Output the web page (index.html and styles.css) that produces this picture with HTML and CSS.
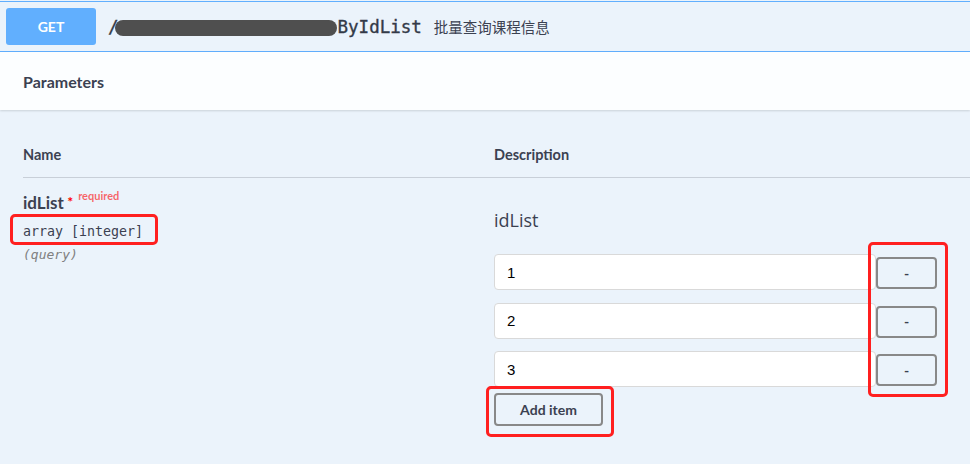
FILE: index.html
```html
<!DOCTYPE html>
<html lang="zh">
<head>
<meta charset="utf-8">
<title>Swagger</title>
<link rel="stylesheet" href="styles.css">
</head>
<body>
<div class="page">
  <div class="opblock">
    <div class="summary">
      <span class="method">GET</span>
      <span class="path">/<span class="redact"></span>ByIdList</span>
      <span class="desc">批量查询课程信息</span>
    </div>
    <div class="section-header">
      <h4 class="section-title">Parameters</h4>
    </div>
    <div class="params">
      <div class="row head">
        <div class="col-name">Name</div>
        <div class="col-desc">Description</div>
      </div>
      <div class="row param">
        <div class="col-name">
          <div class="param-name">idList<span class="star">&nbsp;*</span><span class="required">required</span></div>
          <div class="param-type">array [integer]</div>
          <div class="param-in">(query)</div>
        </div>
        <div class="col-desc">
          <div class="desc-title">idList</div>
          <div class="item"><input class="item-input" type="text" value="1"><button class="btn-minus">-</button></div>
          <div class="item"><input class="item-input" type="text" value="2"><button class="btn-minus">-</button></div>
          <div class="item"><input class="item-input" type="text" value="3"><button class="btn-minus">-</button></div>
          <button class="btn-add">Add item</button>
        </div>
      </div>
    </div>
  </div>
  <div class="mark mark-type"></div>
  <div class="mark mark-minus"></div>
  <div class="mark mark-add"></div>
</div>
</body>
</html>
```
FILE: styles.css
```css
* { box-sizing: border-box; }
html, body { margin: 0; padding: 0; }
body {
  background: #ebf3fb;
  color: #3b4151;
  font-family: "Open Sans", "Noto Sans", sans-serif;
  width: 970px;
  height: 464px;
  overflow: hidden;
}
.page { position: relative; width: 970px; height: 464px; }
.opblock { padding-top: 1px; }
.summary {
  display: flex;
  align-items: center;
  height: 51px;
  padding: 6px 6px;
  border-top: 1px solid #61affe;
  border-bottom: 1px solid #61affe;
}
.method {
  display: flex;
  align-items: center;
  justify-content: center;
  width: 90px;
  height: 37px;
  background: #61affe;
  border-radius: 3px;
  color: #fff;
  font-family: "Lato", sans-serif;
  font-weight: 700;
  font-size: 14px;
}
.path {
  display: flex;
  align-items: center;
  margin-left: 12px;
  font-family: "DejaVu Sans Mono", monospace;
  font-size: 17.5px;
  font-weight: 400;
  color: #333a48;
  -webkit-text-stroke: 0.35px #333a48;
}
.redact {
  display: inline-block;
  width: 222px;
  height: 16px;
  margin-left: -4px;
  margin-right: 1px;
  margin-top: 2px;
  background: #4f4f4f;
  border-radius: 8px;
}
.desc {
  margin-left: 12px;
  font-family: "Noto Sans CJK SC", sans-serif;
  font-size: 14.5px;
  color: #3b4151;
}
.section-header {
  height: 58px;
  display: flex;
  align-items: center;
  padding-left: 23px;
  background: rgba(255,255,255,0.85);
  box-shadow: 0 1px 2px rgba(0,0,0,0.14);
}
.section-title {
  margin: 0;
  font-family: "Lato", sans-serif;
  font-weight: 700;
  font-size: 16px;
}
.params { padding-left: 23px; }
.row { display: flex; }
.col-name { width: 471px; flex: none; }
.col-desc { flex: 1; }
.head {
  padding-top: 35px;
  padding-bottom: 12px;
  border-bottom: 1px solid rgba(59,65,81,0.2);
  font-family: "Lato", sans-serif;
  font-weight: 700;
  font-size: 14.5px;
  line-height: 20px;
}
.param { padding-top: 15px; }
.param-name {
  font-family: "Lato", sans-serif;
  font-weight: 700;
  font-size: 17px;
  line-height: 20px;
}
.star { color: red; font-size: 14px; position: relative; top: -2px; }
.required {
  font-size: 11px;
  color: rgba(255,0,0,0.6);
  position: relative;
  top: -9px;
  margin-left: 5px;
  font-weight: 700;
  font-family: "Lato", sans-serif;
}
.param-type {
  margin-top: 8px;
  font-family: "DejaVu Sans Mono", monospace;
  font-size: 13.3px;
  line-height: 18px;
}
.param-in {
  margin-top: 5px;
  font-family: "DejaVu Sans Mono", monospace;
  font-size: 13px;
  line-height: 18px;
  font-style: italic;
  color: #808080;
}
.desc-title {
  margin-top: 14px;
  margin-bottom: 21px;
  font-size: 18px;
  line-height: 26px;
  font-weight: 400;
}
.item { display: flex; align-items: flex-start; margin-bottom: 12.5px; }
.item-input {
  width: 382px;
  height: 36px;
  margin: 0;
  padding: 0 12px;
  background: #fff;
  border: 1px solid #d9d9d9;
  border-radius: 4px;
  font-family: "Liberation Sans", Arial, sans-serif;
  font-size: 15px;
  color: #000;
  outline: none;
}
.btn-minus {
  width: 61px;
  height: 32px;
  margin: 3px 0 0 0;
  background: transparent;
  border: 2px solid #888;
  border-radius: 4px;
  font-family: "Lato", sans-serif;
  font-weight: 700;
  font-size: 14px;
  color: #3b4151;
  padding: 0;
}
.btn-add {
  display: block;
  width: 109px;
  height: 33px;
  margin-top: -7px;
  background: transparent;
  border: 2px solid #888;
  border-radius: 4px;
  font-family: "Lato", sans-serif;
  font-weight: 700;
  font-size: 14px;
  color: #3b4151;
  padding: 0;
}
.mark {
  position: absolute;
  border: 3px solid #ff1f1f;
  border-radius: 5px;
}
.mark-type { left: 10px; top: 214px; width: 148px; height: 31px; }
.mark-minus { left: 868px; top: 242px; width: 80px; height: 155px; }
.mark-add { left: 486px; top: 386px; width: 128px; height: 51px; }
```
